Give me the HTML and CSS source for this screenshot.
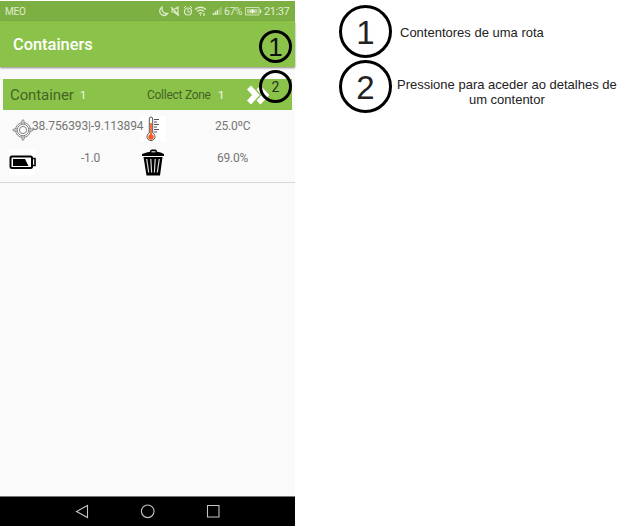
FILE: index.html
```html
<!DOCTYPE html>
<html lang="pt">
<head>
<meta charset="utf-8">
<title>Containers</title>
<link rel="stylesheet" href="styles.css">
</head>
<body>
<div class="page">
  <main class="phone">
    <div class="status">
      <span class="carrier">MEO</span>
      <svg class="status-icons" width="66" height="14" viewBox="0 0 66 14" fill="none" stroke="#dcebc8" stroke-width="1">
        <path d="M4 3C1 5 1 9 3.500 10.500C5.500 12 8 11.500 9.500 9.500C5.500 10 3.500 7 4 3Z" stroke-width="1.300"/>
        <path d="M14 5.500h2l4-2.500v8l-4-3h-2zM13 3l8 8.500" stroke-width="1.200"/>
        <circle cx="30" cy="7.500" r="3.500" stroke-width="1.200"/><path d="M30 5v3h2M26 4l2-2M34 4l-2-2"/>
        <path d="M37 5.500Q42.500 1 48 5.500M39 7.500Q42.500 4.500 46 7.500M41 9.500Q42.500 8.200 44 9.500" stroke-width="1.300"/><path d="M42 11h1M46 9v3" stroke-width="1.300"/>
        <path d="M55.500 11v-2M57.500 11V7.500M59.500 11V6" stroke-width="1.600"/><path d="M61.300 11V4.500M63 11V3" stroke="#a0c672" stroke-width="1.700"/>
      </svg>
      <span class="percent">67%</span>
      <svg class="charge" width="17" height="9" viewBox="0 0 17 9"><path d="M.5.500h13.500v7.500H.5z" fill="none" stroke="#cfe2b5"/><path d="M2 2h10.500v4.500H2z" fill="#b4d28d"/><path d="M5 4.250h5M7.500 2v4.500" stroke="#fff"/><path d="M15.500 2.500v3.500" stroke="#dcebc8" stroke-width="1.500"/></svg>
      <span class="clock">21:37</span>
    </div>
    <header class="appbar"><h1>Containers</h1><span class="marker marker-one">1</span></header>
    <section class="item">
      <div class="item-head">
        <span class="item-title">Container</span><span class="item-no">1</span>
        <span class="zone">Collect Zone</span><span class="zone-no">1</span>
        <svg class="chevrons" width="25" height="22" viewBox="0 0 25 22" fill="none" stroke="#fff" stroke-width="5.500"><path d="M3 3.500L10 11L3 18.500M12.500 3.500L19.500 11L12.500 18.500"/></svg>
        <span class="marker marker-two">2</span>
      </div>
      <div class="details">
        <svg class="target" width="22" height="22" viewBox="0 0 22 22" fill="none" stroke="#777" stroke-width=".9"><circle cx="11" cy="11" r="7.500"/><circle cx="11" cy="11" r="5.800"/><circle cx="11" cy="11" r="3.600"/><path d="M10 5V1.500q1-1.500 2 0V5M10 17v3.500q1 1.500 2 0V17M5 10H1.500q-1.500 1 0 2H5M17 10h3.500q1.500 1 0 2H17" fill="#fafafa"/></svg>
        <span class="coords">38.756393|-9.113894</span>
        <svg class="thermo" width="26" height="26" viewBox="0 0 26 26"><path fill="#fff" d="M0 0h26v26H0z"/><path d="M9.300 17V3q0-2 1.700-2t1.700 2v14a4 4 0 1 1-3.400 0Z" fill="#fff" stroke="#555"/><path d="M11 7v13" stroke="#ff6c3e" stroke-width="2"/><circle cx="11" cy="21" r="2.700" fill="#f85820"/><path d="M14 3.500h5M14 6h3M14 8.500h5M14 11h3M14 13.500h5M14 16h3" stroke="#555"/></svg>
        <span class="temp">25.0ºC</span>
        <svg class="battery" width="27" height="26" viewBox="0 0 27 26"><path fill="#fff" d="M0 0h26v26H0z"/><rect x="1.500" y="7.500" width="21.500" height="11.500" rx="1.500" fill="none" stroke="#000" stroke-width="2"/><path d="M4 10h12l3.500 7H4z"/><path d="M23 9.500h3v7h-3" fill="none" stroke="#000" stroke-width="1.600"/></svg>
        <span class="level">-1.0</span>
        <svg class="trash" width="24" height="27" viewBox="0 0 24 27"><path d="M1 7V5Q6 3 9 2.800Q9 .5 11 .5h3Q16 .5 16 2.800Q20 3 23 5v2zM2.500 8h19L19 26.500H5.500z"/><path d="M10.500 2.800h4" stroke="#fff"/><path d="M5.700 10l2 13.500M9.800 10l.8 13.500M14.200 10l-.8 13.500M18.300 10l-2 13.500" stroke="#ddd" stroke-width="1.200"/></svg>
        <span class="fill">69.0%</span>
      </div>
    </section>
    <nav class="navbar">
      <svg width="295" height="29" viewBox="0 0 295 29" fill="none" stroke="#c4c4c4" stroke-width="1.100"><path d="M87.500 8.500v12L76.500 14.500z"/><circle cx="147.700" cy="14.300" r="6.300"/><path d="M207.500 8.500h11.500v11.500h-11.500z"/></svg>
    </nav>
  </main>
  <aside class="legend">
    <div class="note"><span class="badge">1</span><p class="note-one">Contentores de uma rota</p></div>
    <div class="note"><span class="badge">2</span><p class="note-two">Pressione para aceder ao detalhes de<br>um contentor</p></div>
  </aside>
</div>
</body>
</html>
```
FILE: styles.css
```css
* { box-sizing: border-box; }
body { margin: 0; background: #fff; font-family: Roboto, "Liberation Sans", sans-serif; }
h1, p { margin: 0; }
svg { display: block; flex: none; }
span, p, h1 { white-space: nowrap; }
.page { display: flex; height: 527px; overflow: hidden; }
.phone { display: flex; flex-direction: column; flex: none; width: 296px; height: 525px; margin-top: 1px; background: #fafafa; border-right: 1px solid #fff; }
.status { display: flex; align-items: center; height: 20px; padding-left: 5px; background: #7cb043; color: #e0edcf; }
.carrier { width: 153px; font-size: 10px; letter-spacing: -.2px; }
.percent { width: 21px; font-size: 10.5px; letter-spacing: -.5px; }
.clock { margin-left: 2px; font-size: 11px; letter-spacing: -.4px; }
.appbar { position: relative; display: flex; align-items: center; height: 46px; padding-left: 13px; background: #8bc34a; box-shadow: 0 1px 2px rgba(0,0,0,.45); }
h1 { color: #fff; font-size: 16.4px; font-weight: 500; line-height: 20px; padding-top: 2px; }
.marker { position: absolute; display: flex; align-items: center; justify-content: center; width: 33px; height: 33px; border: 3px solid #000; border-radius: 50%; color: #111; }
.marker-one { left: 259px; top: 9px; padding-top: 2px; font: 26px "Liberation Sans", sans-serif; }
.marker-two { left: 256px; top: -9px; color: #24301a; font-size: 14px; }
.item { height: 116px; border-bottom: 1px solid #d8d8d8; padding-top: 12px; }
.item-head { position: relative; display: flex; align-items: center; width: 289px; height: 31px; margin-left: 3px; padding-left: 7px; background: #8bc34a; color: #466326; }
.item-title { width: 70px; padding-top: 1px; font-size: 15px; letter-spacing: -.1px; }
.item-no { width: 67px; padding-top: 2px; color: #f1f8e9; font-size: 11px; }
.zone { width: 71px; font-size: 12px; letter-spacing: -.27px; }
.zone-no { width: 28px; color: #f1f8e9; font-size: 11.5px; }
.details { display: grid; grid-template-columns: 32px 109px 26px 128px; grid-template-rows: 33px 33px; padding-top: 6px; color: #757575; font-size: 12px; letter-spacing: -.2px; }
.target { margin: 3px 0 0 12px; }
.coords { position: relative; z-index: 1; padding-top: 3px; letter-spacing: -.12px; }
.thermo { margin-left: -1px; }
.temp { padding: 3px 0 0 48px; }
.battery { margin-left: 9px; }
.level { padding: 2px 0 0 49px; }
.fill { padding: 2px 0 0 50px; }
.navbar { height: 30px; margin-top: auto; background: #000; border-top: 1px solid #777; }
.legend { flex: 1; padding: 5px 0 0 43px; font-family: "Liberation Sans", sans-serif; color: #222; }
.note { display: flex; align-items: center; height: 53px; margin-bottom: 2px; font-size: 13px; line-height: 15px; }
.badge { display: flex; align-items: center; justify-content: center; flex: none; width: 53px; height: 53px; padding-top: 1px; border: 3px solid #000; border-radius: 50%; font-size: 33px; }
.note-one { padding: 2px 0 0 8px; }
.note-two { margin-top: 10px; padding-left: 5px; text-align: center; }
```
